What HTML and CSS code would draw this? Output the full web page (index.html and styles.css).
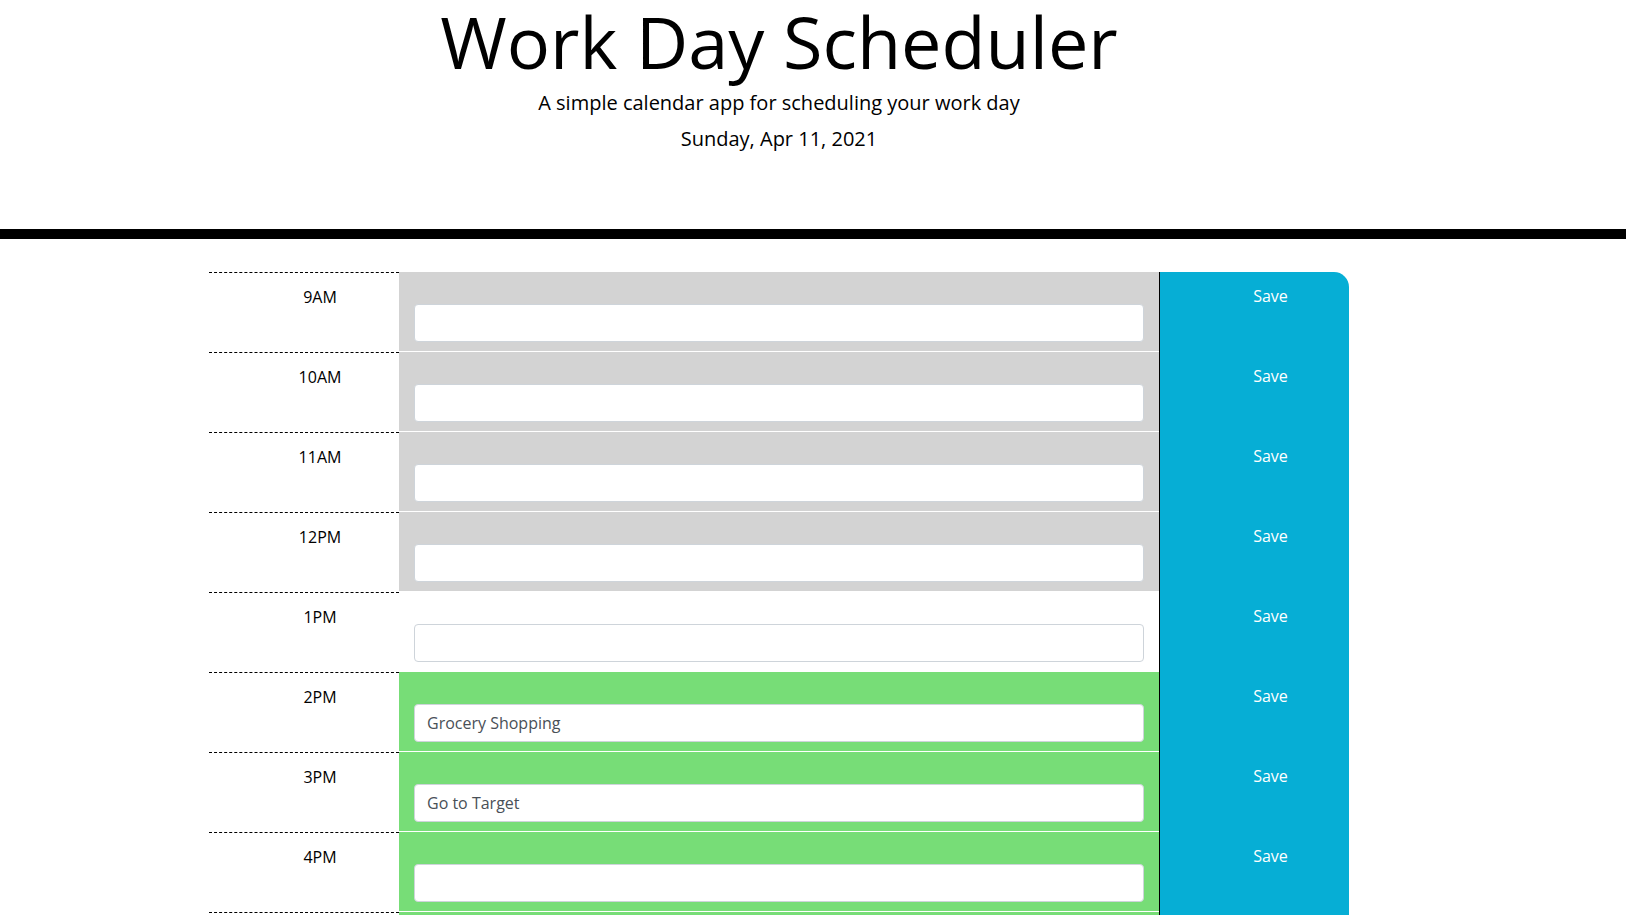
FILE: index.html
```html
<!DOCTYPE html>
<html lang="en">
<head>
<meta charset="utf-8">
<title>Work Day Scheduler</title>
<link rel="stylesheet" href="styles.css">
</head>
<body>
<header class="jumbotron">
  <div class="jumbo-inner">
    <h1 class="display-3">Work Day Scheduler</h1>
    <p class="lead">A simple calendar app for scheduling your work day</p>
    <p class="lead">Sunday, Apr 11, 2021</p>
  </div>
</header>
<div class="page">
  <div class="container">
    <div class="row past">
      <div class="hour">9AM</div>
      <div class="description"><input class="form-control" type="text" value=""></div>
      <button class="saveBtn">Save</button>
    </div>
    <div class="row past">
      <div class="hour">10AM</div>
      <div class="description"><input class="form-control" type="text" value=""></div>
      <button class="saveBtn">Save</button>
    </div>
    <div class="row past">
      <div class="hour">11AM</div>
      <div class="description"><input class="form-control" type="text" value=""></div>
      <button class="saveBtn">Save</button>
    </div>
    <div class="row past">
      <div class="hour">12PM</div>
      <div class="description"><input class="form-control" type="text" value=""></div>
      <button class="saveBtn">Save</button>
    </div>
    <div class="row present">
      <div class="hour">1PM</div>
      <div class="description"><input class="form-control" type="text" value=""></div>
      <button class="saveBtn">Save</button>
    </div>
    <div class="row future">
      <div class="hour">2PM</div>
      <div class="description"><input class="form-control" type="text" value="Grocery Shopping"></div>
      <button class="saveBtn">Save</button>
    </div>
    <div class="row future">
      <div class="hour">3PM</div>
      <div class="description"><input class="form-control" type="text" value="Go to Target"></div>
      <button class="saveBtn">Save</button>
    </div>
    <div class="row future">
      <div class="hour">4PM</div>
      <div class="description"><input class="form-control" type="text" value=""></div>
      <button class="saveBtn">Save</button>
    </div>
    <div class="row future">
      <div class="hour">5PM</div>
      <div class="description"><input class="form-control" type="text" value=""></div>
      <button class="saveBtn">Save</button>
    </div>
  </div>
</div>
</body>
</html>
```
FILE: styles.css
```css
html, body {
  margin: 0;
  padding: 0;
}

body {
  font-family: "Open Sans", "Liberation Sans", sans-serif;
  font-size: 16px;
  line-height: 1;
  color: #000;
  background: #fff;
}

.jumbotron {
  padding: 5px 0 64px;
  margin-bottom: 33px;
  border-bottom: 10px solid #000;
}

.jumbo-inner {
  width: 1558px;
  text-align: center;
}

.display-3 {
  margin: 0 0 16px;
  font-size: 72px;
  font-weight: 400;
  line-height: 1;
}

.lead {
  margin: 0 0 16px;
  font-size: 20px;
  font-weight: 400;
  line-height: 1;
}

.page {
  width: 1558px;
}

.container {
  width: 1140px;
  margin: 0 auto;
}

.row {
  display: grid;
  grid-template-columns: 190px 760px 190px;
  height: 80px;
}

.hour {
  border-top: 1px dashed #000;
  padding: 16px 0 0 32px;
  text-align: center;
  color: #000;
  background: #fff;
}

.description {
  padding: 32px 15px 0;
  border-bottom: 1px solid #fff;
}

.past .description {
  background: #d3d3d3;
}

.present .description {
  background: #fff;
}

.future .description {
  background: #77dd77;
}

.form-control {
  display: block;
  box-sizing: border-box;
  width: 100%;
  height: 38px;
  margin: 0;
  padding: 6px 12px;
  border: 1px solid #ced4da;
  border-radius: 4px;
  background: #fff;
  color: #495057;
  font-family: "Open Sans", "Liberation Sans", sans-serif;
  font-size: 16px;
  line-height: 1.5;
}

.saveBtn {
  display: flex;
  align-items: flex-start;
  justify-content: center;
  margin: 0;
  padding: 16px 0 0 32px;
  border: 0;
  border-left: 1px solid #000;
  background: #06aed5;
  color: #fff;
  font-family: "Open Sans", "Liberation Sans", sans-serif;
  font-size: 16px;
  line-height: 1;
}

.row:first-child .saveBtn {
  border-top-right-radius: 15px;
}
```
